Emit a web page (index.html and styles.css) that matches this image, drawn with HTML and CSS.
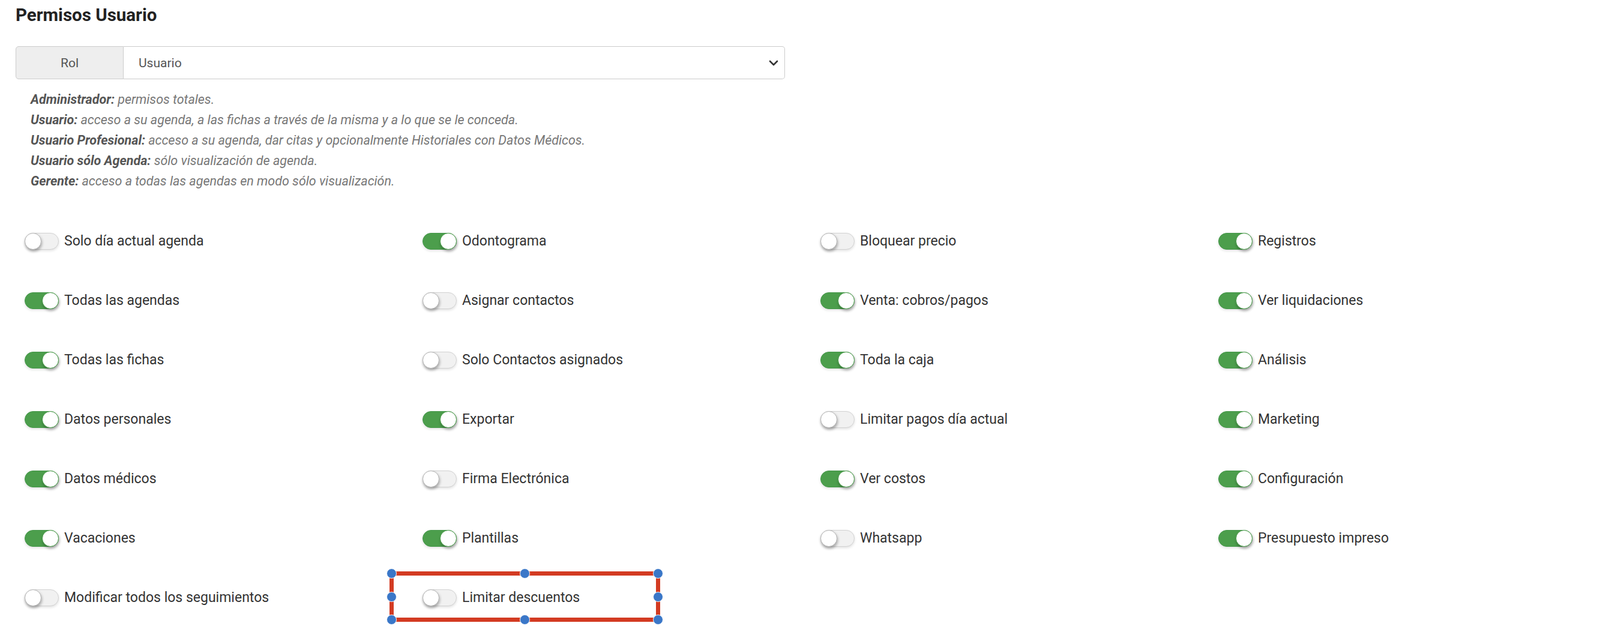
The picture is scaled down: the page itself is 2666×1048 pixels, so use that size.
FILE: index.html
```html
<!DOCTYPE html>
<html lang="es">
<head>
    <meta charset="UTF-8">
    <title>Permisos Usuario</title>
    <link rel="stylesheet" href="styles.css">
</head>
<body>
    <div class="header">
        <h3 class="title">Permisos Usuario</h3>

        <!-- selector de rol -->
        <div class="role-group">
            <span class="role-addon">Rol</span>
            <div class="role-select">
                <span>Usuario</span>
                <svg class="chevron" width="16" height="10" viewBox="0 0 16 10">
                    <path d="M2 2 L8 8 L14 2" fill="none" stroke="#333" stroke-width="2.6" stroke-linecap="round" stroke-linejoin="round"/>
                </svg>
            </div>
        </div>

        <div class="role-help">
            <p><b>Administrador:</b> permisos totales.</p>
            <p><b>Usuario:</b> acceso a su agenda, a las fichas a través de la misma y a lo que se le conceda.</p>
            <p><b>Usuario Profesional:</b> acceso a su agenda, dar citas y opcionalmente Historiales con Datos Médicos.</p>
            <p><b>Usuario sólo Agenda:</b> sólo visualización de agenda.</p>
            <p><b>Gerente:</b> acceso a todas las agendas en modo sólo visualización.</p>
        </div>
    </div>

    <!-- permisos -->
    <div class="perm-grid">
        <label class="perm"><span class="switch"></span><span class="perm-label">Solo día actual agenda</span></label>
        <label class="perm"><span class="switch on"></span><span class="perm-label">Odontograma</span></label>
        <label class="perm"><span class="switch"></span><span class="perm-label">Bloquear precio</span></label>
        <label class="perm"><span class="switch on"></span><span class="perm-label">Registros</span></label>

        <label class="perm"><span class="switch on"></span><span class="perm-label">Todas las agendas</span></label>
        <label class="perm"><span class="switch"></span><span class="perm-label">Asignar contactos</span></label>
        <label class="perm"><span class="switch on"></span><span class="perm-label">Venta: cobros/pagos</span></label>
        <label class="perm"><span class="switch on"></span><span class="perm-label">Ver liquidaciones</span></label>

        <label class="perm"><span class="switch on"></span><span class="perm-label">Todas las fichas</span></label>
        <label class="perm"><span class="switch"></span><span class="perm-label">Solo Contactos asignados</span></label>
        <label class="perm"><span class="switch on"></span><span class="perm-label">Toda la caja</span></label>
        <label class="perm"><span class="switch on"></span><span class="perm-label">Análisis</span></label>

        <label class="perm"><span class="switch on"></span><span class="perm-label">Datos personales</span></label>
        <label class="perm"><span class="switch on"></span><span class="perm-label">Exportar</span></label>
        <label class="perm"><span class="switch"></span><span class="perm-label">Limitar pagos día actual</span></label>
        <label class="perm"><span class="switch on"></span><span class="perm-label">Marketing</span></label>

        <label class="perm"><span class="switch on"></span><span class="perm-label">Datos médicos</span></label>
        <label class="perm"><span class="switch"></span><span class="perm-label">Firma Electrónica</span></label>
        <label class="perm"><span class="switch on"></span><span class="perm-label">Ver costos</span></label>
        <label class="perm"><span class="switch on"></span><span class="perm-label">Configuración</span></label>

        <label class="perm"><span class="switch on"></span><span class="perm-label">Vacaciones</span></label>
        <label class="perm"><span class="switch on"></span><span class="perm-label">Plantillas</span></label>
        <label class="perm"><span class="switch"></span><span class="perm-label">Whatsapp</span></label>
        <label class="perm"><span class="switch on"></span><span class="perm-label">Presupuesto impreso</span></label>

        <label class="perm"><span class="switch"></span><span class="perm-label">Modificar todos los seguimientos</span></label>
        <label class="perm marked">
            <span class="switch"></span><span class="perm-label">Limitar descuentos</span>
            <!-- marca de selección -->
            <span class="annot">
                <i class="handle tl"></i><i class="handle tm"></i><i class="handle tr"></i>
                <i class="handle ml"></i><i class="handle mr"></i>
                <i class="handle bl"></i><i class="handle bm"></i><i class="handle br"></i>
            </span>
        </label>
    </div>
</body>
</html>
```

FILE: styles.css
```css
body {
    margin: 0;
    background: #fff;
    font-family: Roboto, "Liberation Sans", Arial, sans-serif;
    color: #333;
}
.header {
    padding: 0 26px;
}
.title {
    margin: 0;
    padding-top: 8px;
    font-size: 29.5px;
    line-height: 34px;
    font-weight: 700;
    color: #222;
}
/* Rol */
.role-group {
    display: flex;
    width: 1282px;
    height: 55px;
    margin-top: 35px;
    box-sizing: border-box;
    font-size: 21px;
    color: #555;
}
.role-addon {
    width: 180px;
    display: flex;
    align-items: center;
    justify-content: center;
    background: #eee;
    border: 1px solid #ccc;
    border-radius: 5px 0 0 5px;
    box-sizing: border-box;
}
.role-select {
    flex: 1;
    display: flex;
    align-items: center;
    justify-content: space-between;
    padding: 0 10px 0 25px;
    border: 1px solid #ccc;
    border-left: none;
    border-radius: 0 5px 5px 0;
    box-sizing: border-box;
}
.role-help {
    margin-top: 17px;
    padding-left: 25px;
    font-size: 21.5px;
    line-height: 34px;
    font-style: italic;
    color: #777;
}
.role-help p {
    margin: 0;
}
.role-help b {
    color: #555;
}
/* grid de permisos */
.perm-grid {
    display: grid;
    grid-template-columns: repeat(4, 663px);
    grid-auto-rows: 99px;
    margin-top: 33px;
}
.perm {
    display: flex;
    align-items: center;
    padding-left: 41px;
    font-size: 23px;
    color: #333;
}
.perm-label {
    margin-left: 9px;
}
.switch {
    position: relative;
    flex: none;
    width: 57px;
    height: 28px;
    border-radius: 14px;
    background: #f1f1f1;
    border: 1px solid #d2d2d2;
    box-sizing: border-box;
    box-shadow: 0 2px 4px rgba(0, 0, 0, 0.12);
}
.switch::after {
    content: '';
    position: absolute;
    top: -1px;
    left: -1px;
    width: 28px;
    height: 28px;
    border-radius: 50%;
    background: #fff;
    border: 1px solid #b5b5b5;
    box-sizing: border-box;
    box-shadow: 1px 3px 4px rgba(0, 0, 0, 0.3);
}
.switch.on {
    background: #4c9e4c;
    border-color: #45984a;
}
.switch.on::after {
    left: auto;
    right: -1px;
    border-color: #4c9e4c;
}
/* recuadro rojo */
.marked {
    position: relative;
}
.annot {
    position: absolute;
    left: -14px;
    top: 6px;
    width: 451px;
    height: 84px;
    border: 7px solid #d33b22;
    box-sizing: border-box;
}
.handle {
    position: absolute;
    width: 17px;
    height: 17px;
    border-radius: 50%;
    background: #3a77c8;
    border: 1.5px solid #fff;
    box-sizing: border-box;
}
.tl, .tm, .tr { top: -12px; }
.bl, .bm, .br { bottom: -12px; }
.ml, .mr { top: calc(50% - 8.5px); }
.tl, .ml, .bl { left: -12px; }
.tr, .mr, .br { right: -12px; }
.tm, .bm { left: calc(50% - 8.5px); }
```
